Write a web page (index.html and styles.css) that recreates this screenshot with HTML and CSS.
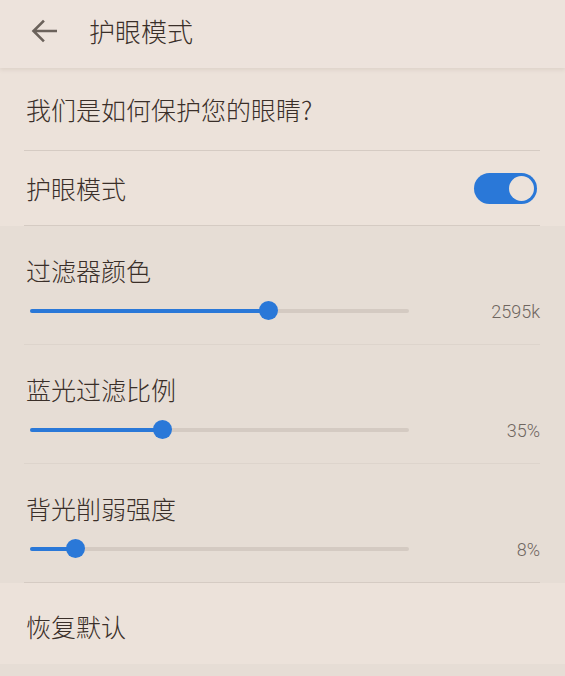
FILE: index.html
```html
<!DOCTYPE html>
<html lang="zh-CN">
<head>
<meta charset="utf-8">
<title>护眼模式</title>
<link rel="stylesheet" href="styles.css">
</head>
<body>
<div class="app">
  <header class="topbar">
    <svg class="back" width="26" height="24" viewBox="0 0 26 24" aria-hidden="true">
      <path d="M25 12H3M12 2.5L2.5 12L12 21.5" fill="none" stroke="#6b625b" stroke-width="2.6" stroke-linecap="square"/>
    </svg>
    <h1 class="title">护眼模式</h1>
  </header>

  <section class="group light">
    <div class="row row-q">我们是如何保护您的眼睛?</div>
    <div class="divider"></div>
    <div class="row row-toggle">
      <span>护眼模式</span>
      <span class="toggle"><span class="knob"></span></span>
    </div>
    <div class="divider"></div>
  </section>

  <section class="group dark">
    <div class="slider-item">
      <div class="label">过滤器颜色</div>
      <div class="slider-row">
        <div class="track"><div class="fill" style="width:63%"></div><div class="thumb" style="left:63%"></div></div>
        <div class="value">2595k</div>
      </div>
    </div>
    <div class="divider faint"></div>
    <div class="slider-item">
      <div class="label">蓝光过滤比例</div>
      <div class="slider-row">
        <div class="track"><div class="fill" style="width:35%"></div><div class="thumb" style="left:35%"></div></div>
        <div class="value">35%</div>
      </div>
    </div>
    <div class="divider faint"></div>
    <div class="slider-item">
      <div class="label">背光削弱强度</div>
      <div class="slider-row">
        <div class="track"><div class="fill" style="width:12%"></div><div class="thumb" style="left:12%"></div></div>
        <div class="value">8%</div>
      </div>
    </div>
    <div class="divider"></div>
  </section>

  <section class="group light">
    <div class="row row-reset">恢复默认</div>
  </section>
  <div class="footer"></div>
</div>
</body>
</html>
```
FILE: styles.css
```css
* { box-sizing: border-box; }
html, body { margin: 0; padding: 0; }
body {
  background: #e6ddd5;
  font-family: "Noto Sans CJK SC", "Noto Sans", sans-serif;
  font-weight: 300;
  color: #3a2f29;
}
.app { width: 565px; height: 676px; overflow: hidden; display: flex; flex-direction: column; }
.topbar {
  height: 68px;
  background: #ede3dc;
  display: flex;
  align-items: center;
  padding-left: 31px;
  position: relative;
  z-index: 1;
  box-shadow: 0 2px 4px rgba(120, 100, 85, 0.12);
}
.back { margin-top: -6px; }
.title {
  margin: -6px 0 0 32px;
  font-size: 26px;
  font-weight: 300;
  line-height: 32px;
  color: #3a2f29;
}
.group.light { background: #ece2da; }
.group.dark { background: #e6ddd5; }
.row {
  display: flex;
  align-items: center;
  justify-content: space-between;
  padding: 0 28px 0 26px;
  font-size: 25px;
  line-height: 32px;
}
.row-q { height: 82px; }
.row-toggle { height: 74px; }
.row-reset { height: 81px; padding-top: 4px; }
.divider { height: 1px; background: #d5cbc3; margin: 0 25px 0 24px; }
.divider.faint { background: #ddd4cc; }
.toggle {
  width: 63px; height: 31px; border-radius: 16px;
  background: #2a78d8;
  position: relative;
  margin-top: 1px;
}
.knob {
  position: absolute; right: 3px; top: 3px;
  width: 25px; height: 25px; border-radius: 50%;
  background: #ece2da;
}
.slider-item { padding: 28px 0 9px; }
.label { font-size: 25px; line-height: 32px; padding-left: 26px; }
.slider-row {
  height: 49px;
  display: flex;
  align-items: center;
  padding: 0 25px 0 30px;
}
.track {
  width: 379px; height: 4px;
  background: #d4cac2;
  position: relative;
  border-radius: 2px;
}
.fill { height: 4px; background: #2a78d8; border-radius: 2px; }
.thumb {
  position: absolute; top: 50%;
  width: 19px; height: 19px; margin: -9.5px 0 0 -9.5px;
  border-radius: 50%;
  background: #2a78d8;
}
.value {
  margin-left: auto;
  font-family: Roboto, "Noto Sans", sans-serif;
  font-weight: 300;
  font-size: 18px;
  color: #6f6660;
  margin-top: 2px;
}
.footer { flex: 1; background: #e6ddd5; }
```
